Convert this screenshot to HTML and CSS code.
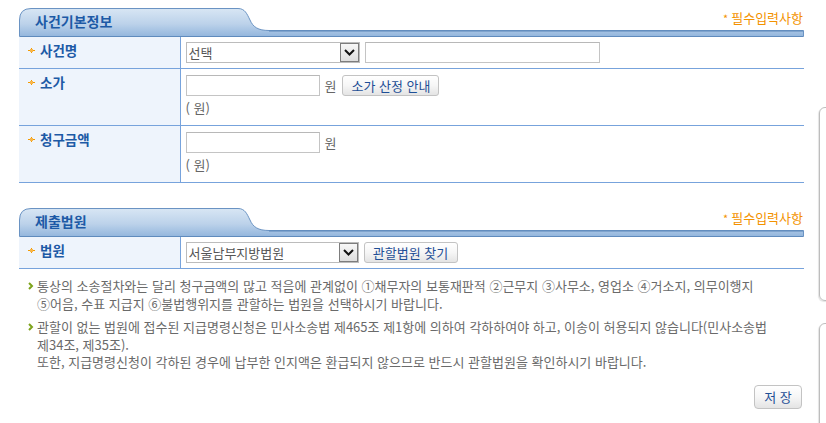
FILE: index.html
```html
<!DOCTYPE html>
<html lang="ko">
<head>
<meta charset="utf-8">
<title>사건기본정보</title>
<link rel="stylesheet" href="styles.css">
</head>
<body>
<div class="page">
  <main class="main">
    <section class="sec">
      <div class="sec-head">
        <svg class="tab-bg" width="785" height="29" viewBox="0 0 785 29" aria-hidden="true">
          <defs>
            <linearGradient id="tg1" x1="0" y1="0" x2="0" y2="1">
              <stop offset="0" stop-color="#d8e6f4"/>
              <stop offset="0.55" stop-color="#bcd2ea"/>
              <stop offset="1" stop-color="#93b6dd"/>
            </linearGradient>
          </defs>
          <path d="M0.5,28.5 L0.5,12 Q0.5,0.5 12,0.5 L219,0.5 C226,0.5 228,6 231,12 C234,19 239,22.5 250,22.5 L784.5,22.5 L784.5,28.5 Z" fill="url(#tg1)" stroke="#6a93c3" stroke-width="1"/>
          <line x1="250" y1="23" x2="784" y2="23" stroke="#5b86b8" stroke-width="1"/>
          <line x1="1" y1="28.5" x2="784" y2="28.5" stroke="#5f8bbd" stroke-width="1"/>
        </svg>
        <h2 class="tab-title">사건기본정보</h2>
        <span class="req"><span class="req-star">*</span>필수입력사항</span>
      </div>
      <table class="form">
        <tr class="r1">
          <th><span class="lbl"><svg class="star" width="7" height="5" viewBox="0 0 7 5"><rect x="0" y="2" width="7" height="1" fill="#f39a00"/><rect x="3" y="0" width="1" height="5" fill="#f39a00"/><rect x="2" y="1" width="3" height="3" fill="#f7b54a"/></svg>사건명</span></th>
          <td>
            <div class="line">
              <span class="selbox w174">
                <select class="sel"><option>선택</option></select>
                <span class="selbtn"><svg width="11" height="7" viewBox="0 0 11 7"><path d="M1,1 L5.5,5.5 L10,1" fill="none" stroke="#111" stroke-width="2"/></svg></span>
              </span>
              <input class="inp w235" type="text">
            </div>
          </td>
        </tr>
        <tr class="r2">
          <th><span class="lbl"><svg class="star" width="7" height="5" viewBox="0 0 7 5"><rect x="0" y="2" width="7" height="1" fill="#f39a00"/><rect x="3" y="0" width="1" height="5" fill="#f39a00"/><rect x="2" y="1" width="3" height="3" fill="#f7b54a"/></svg>소가</span></th>
          <td>
            <div class="line">
              <input class="inp w134" type="text">
              <span class="unit">원</span>
              <button class="btn b97" type="button">소가 산정 안내</button>
            </div>
            <div class="sub">( 원)</div>
          </td>
        </tr>
        <tr class="r2">
          <th><span class="lbl"><svg class="star" width="7" height="5" viewBox="0 0 7 5"><rect x="0" y="2" width="7" height="1" fill="#f39a00"/><rect x="3" y="0" width="1" height="5" fill="#f39a00"/><rect x="2" y="1" width="3" height="3" fill="#f7b54a"/></svg>청구금액</span></th>
          <td>
            <div class="line">
              <input class="inp w134" type="text">
              <span class="unit">원</span>
            </div>
            <div class="sub">( 원)</div>
          </td>
        </tr>
      </table>
    </section>

    <section class="sec sec2">
      <div class="sec-head">
        <svg class="tab-bg" width="785" height="29" viewBox="0 0 785 29" aria-hidden="true">
          <defs>
            <linearGradient id="tg2" x1="0" y1="0" x2="0" y2="1">
              <stop offset="0" stop-color="#d8e6f4"/>
              <stop offset="0.55" stop-color="#bcd2ea"/>
              <stop offset="1" stop-color="#93b6dd"/>
            </linearGradient>
          </defs>
          <path d="M0.5,28.5 L0.5,12 Q0.5,0.5 12,0.5 L219,0.5 C226,0.5 228,6 231,12 C234,19 239,22.5 250,22.5 L784.5,22.5 L784.5,28.5 Z" fill="url(#tg2)" stroke="#6a93c3" stroke-width="1"/>
          <line x1="250" y1="23" x2="784" y2="23" stroke="#5b86b8" stroke-width="1"/>
          <line x1="1" y1="28.5" x2="784" y2="28.5" stroke="#5f8bbd" stroke-width="1"/>
        </svg>
        <h2 class="tab-title">제출법원</h2>
        <span class="req"><span class="req-star">*</span>필수입력사항</span>
      </div>
      <table class="form">
        <tr class="r1">
          <th><span class="lbl"><svg class="star" width="7" height="5" viewBox="0 0 7 5"><rect x="0" y="2" width="7" height="1" fill="#f39a00"/><rect x="3" y="0" width="1" height="5" fill="#f39a00"/><rect x="2" y="1" width="3" height="3" fill="#f7b54a"/></svg>법원</span></th>
          <td>
            <div class="line">
              <span class="selbox w173">
                <select class="sel"><option>서울남부지방법원</option></select>
                <span class="selbtn"><svg width="11" height="7" viewBox="0 0 11 7"><path d="M1,1 L5.5,5.5 L10,1" fill="none" stroke="#111" stroke-width="2"/></svg></span>
              </span>
              <button class="btn b94" type="button">관할법원 찾기</button>
            </div>
          </td>
        </tr>
      </table>
    </section>

    <div class="notes">
      <div class="note">
        <svg class="arr" width="6" height="8" viewBox="0 0 6 8"><path d="M1,1 L4,4 L1,7" fill="none" stroke="#7ea31c" stroke-width="2"/></svg>
        <p><span class="ln">통상의 소송절차와는 달리 청구금액의 많고 적음에 관계없이 ①채무자의 보통재판적 ②근무지 ③사무소, 영업소 ④거소지, 의무이행지</span><span class="ln">⑤어음, 수표 지급지 ⑥불법행위지를 관할하는 법원을 선택하시기 바랍니다.</span></p>
      </div>
      <div class="note">
        <svg class="arr" width="6" height="8" viewBox="0 0 6 8"><path d="M1,1 L4,4 L1,7" fill="none" stroke="#7ea31c" stroke-width="2"/></svg>
        <p><span class="ln">관할이 없는 법원에 접수된 지급명령신청은 민사소송법 제465조 제1항에 의하여 각하하여야 하고, 이송이 허용되지 않습니다(민사소송법</span><span class="ln">제34조, 제35조).</span><span class="ln">또한, 지급명령신청이 각하된 경우에 납부한 인지액은 환급되지 않으므로 반드시 관할법원을 확인하시기 바랍니다.</span></p>
      </div>
    </div>

    <div class="actions">
      <button class="btn save" type="button">저 장</button>
    </div>
  </main>
  <aside class="side">
    <div class="box box1"></div>
    <div class="box box2"></div>
  </aside>
</div>
</body>
</html>
```

FILE: styles.css
```css
html, body {
  margin: 0;
  padding: 0;
  background: #ffffff;
  overflow: hidden;
}
body {
  font-family: "Noto Sans CJK KR", "Noto Sans", sans-serif;
  font-size: 13px;
  color: #666666;
}
.page {
  display: flex;
  width: 826px;
  height: 423px;
  overflow: hidden;
}
.main {
  width: 785px;
  flex-shrink: 0;
  padding: 8px 0 0 19px;
}
.sec2 {
  margin-top: 25px;
}
.sec-head {
  position: relative;
  height: 29px;
  display: flex;
  justify-content: space-between;
  align-items: flex-start;
}
.tab-bg {
  position: absolute;
  left: 0;
  top: 0;
}
.tab-title {
  position: relative;
  margin: 0;
  padding: 4px 0 0 16px;
  font-size: 14px;
  line-height: 18px;
  font-weight: 700;
  color: #1d5aa6;
}
.req {
  position: relative;
  margin-top: 1px;
  margin-right: 1px;
  font-size: 13px;
  line-height: 17px;
  color: #f39200;
}
.req-star {
  display: inline-block;
  margin-right: 3px;
  font-size: 11px;
}
.form {
  width: 785px;
  border-collapse: collapse;
  border-spacing: 0;
}
.form th {
  width: 161px;
  padding: 5px 0 0 9px;
  box-sizing: border-box;
  background: #eef4fc;
  border-right: 1px solid #77a3dc;
  border-bottom: 1px solid #77a3dc;
  text-align: left;
  vertical-align: top;
}
.form td {
  border-bottom: 1px solid #77a3dc;
  vertical-align: top;
  padding: 6px 5px 9px 5px;
}
.form tr.r1 td {
  padding: 5px 5px 5px 5px;
}
.lbl {
  display: flex;
  align-items: center;
  gap: 5px;
  font-size: 13.5px;
  line-height: 17px;
  font-weight: 700;
  color: #1d5aa6;
}
.star {
  flex-shrink: 0;
}
.line {
  display: flex;
  align-items: center;
  height: 21px;
}
.selbox {
  position: relative;
  display: inline-block;
  height: 21px;
}
.w174 { width: 174px; margin-right: 5px; }
.w173 { width: 173px; margin-right: 5px; }
.sel {
  appearance: none;
  -webkit-appearance: none;
  width: 100%;
  height: 21px;
  margin: 0;
  padding: 0 22px 0 2px;
  box-sizing: border-box;
  border: 1px solid #bcbcbc;
  background: #ffffff;
  font-family: "Noto Sans CJK KR", sans-serif;
  font-size: 13px;
  color: #555555;
  border-radius: 0;
}
.selbtn {
  position: absolute;
  right: 1px;
  top: 1px;
  width: 17px;
  height: 17px;
  border: 1px solid #7d7d7d;
  background: linear-gradient(#f7f7f7, #dedede);
  display: flex;
  align-items: center;
  justify-content: center;
  pointer-events: none;
}
.inp {
  height: 21px;
  margin: 0;
  padding: 0 3px;
  box-sizing: border-box;
  border: 1px solid #c4c4c4;
  border-top-color: #b8b8b8;
  background: #ffffff;
  font-family: "Noto Sans CJK KR", sans-serif;
  font-size: 13px;
}
.w235 { width: 235px; }
.w134 { width: 134px; }
.unit {
  margin-left: 5px;
  line-height: 16px;
  color: #666666;
}
.btn {
  height: 21px;
  margin: 0;
  padding: 0;
  border: 1px solid #c3c3c3;
  border-radius: 3px;
  background: linear-gradient(#ffffff 0%, #f6f6f6 50%, #e4e4e4 100%);
  font-family: "Noto Sans CJK KR", sans-serif;
  font-size: 13px;
  line-height: 17px;
  color: #1f4f96;
  cursor: pointer;
}
.b97 { width: 97px; margin-left: 6px; }
.b94 { width: 94px; }
.sub {
  margin-top: 4px;
  line-height: 16px;
  color: #666666;
}
.notes {
  margin-top: 8px;
  padding-left: 9px;
}
.note {
  display: flex;
  align-items: flex-start;
  gap: 3px;
}
.note + .note {
  margin-top: 6px;
}
.arr {
  flex-shrink: 0;
  margin-top: 5px;
}
.note p {
  margin: 0;
  font-size: 13px;
  line-height: 17.5px;
  color: #6a6a6a;
}
.ln {
  display: block;
  white-space: nowrap;
}
.actions {
  display: flex;
  justify-content: flex-end;
  margin-top: 14px;
  padding-right: 2px;
}
.save {
  width: 48px;
  height: 24px;
  border-radius: 4px;
}
.side {
  flex-shrink: 0;
  width: 120px;
  margin-left: 15px;
}
.box {
  box-sizing: border-box;
  border: 1px solid #bdbdbd;
  border-radius: 6px;
  box-shadow: -1px 1px 1px #e4e4e4;
}
.box1 {
  margin-top: 107px;
  height: 194px;
}
.box2 {
  margin-top: 22px;
  height: 200px;
}
```
